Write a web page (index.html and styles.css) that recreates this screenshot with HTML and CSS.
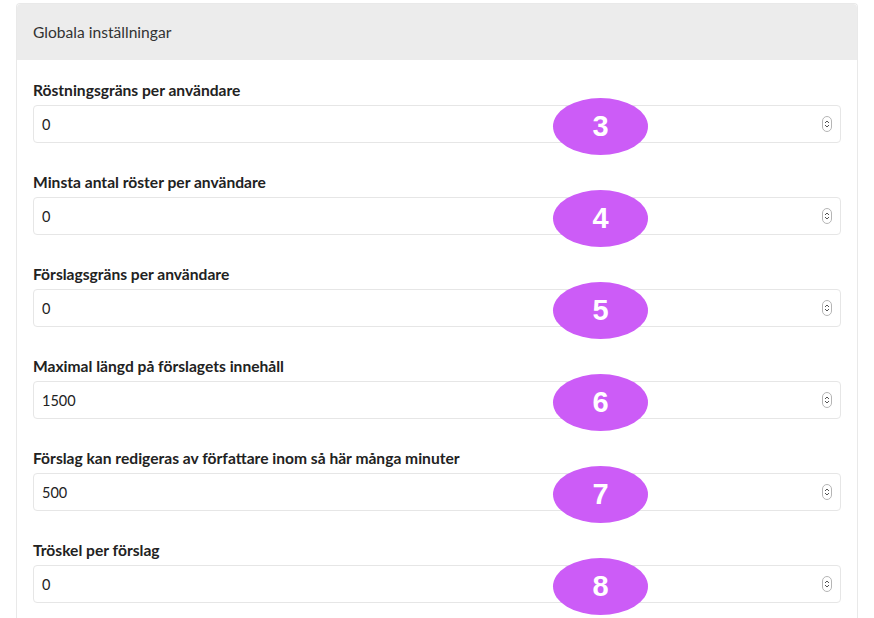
FILE: index.html
```html
<!DOCTYPE html>
<html lang="sv">
<head>
<meta charset="utf-8">
<title>Globala inställningar</title>
<link rel="stylesheet" href="styles.css">
</head>
<body>
<div class="card">
  <div class="card-header">Globala inställningar</div>
  <div class="card-body">
    <div class="group">
      <label class="label">Röstningsgräns per användare</label>
      <div class="field"><span class="value">0</span><span class="spin"><svg width="10" height="16" viewBox="0 0 10 16"><rect x="0.5" y="0.5" width="9" height="15" rx="4.5" fill="#fff" stroke="#b5b5b5"/><path d="M3 7 L5 5 L7 7 M3 9 L5 11 L7 9" fill="none" stroke="#555" stroke-width="1"/></svg></span><span class="badge">3</span></div>
    </div>
    <div class="group">
      <label class="label">Minsta antal röster per användare</label>
      <div class="field"><span class="value">0</span><span class="spin"><svg width="10" height="16" viewBox="0 0 10 16"><rect x="0.5" y="0.5" width="9" height="15" rx="4.5" fill="#fff" stroke="#b5b5b5"/><path d="M3 7 L5 5 L7 7 M3 9 L5 11 L7 9" fill="none" stroke="#555" stroke-width="1"/></svg></span><span class="badge">4</span></div>
    </div>
    <div class="group">
      <label class="label">Förslagsgräns per användare</label>
      <div class="field"><span class="value">0</span><span class="spin"><svg width="10" height="16" viewBox="0 0 10 16"><rect x="0.5" y="0.5" width="9" height="15" rx="4.5" fill="#fff" stroke="#b5b5b5"/><path d="M3 7 L5 5 L7 7 M3 9 L5 11 L7 9" fill="none" stroke="#555" stroke-width="1"/></svg></span><span class="badge">5</span></div>
    </div>
    <div class="group">
      <label class="label">Maximal längd på förslagets innehåll</label>
      <div class="field"><span class="value">1500</span><span class="spin"><svg width="10" height="16" viewBox="0 0 10 16"><rect x="0.5" y="0.5" width="9" height="15" rx="4.5" fill="#fff" stroke="#b5b5b5"/><path d="M3 7 L5 5 L7 7 M3 9 L5 11 L7 9" fill="none" stroke="#555" stroke-width="1"/></svg></span><span class="badge">6</span></div>
    </div>
    <div class="group">
      <label class="label">Förslag kan redigeras av författare inom så här många minuter</label>
      <div class="field"><span class="value">500</span><span class="spin"><svg width="10" height="16" viewBox="0 0 10 16"><rect x="0.5" y="0.5" width="9" height="15" rx="4.5" fill="#fff" stroke="#b5b5b5"/><path d="M3 7 L5 5 L7 7 M3 9 L5 11 L7 9" fill="none" stroke="#555" stroke-width="1"/></svg></span><span class="badge">7</span></div>
    </div>
    <div class="group">
      <label class="label">Tröskel per förslag</label>
      <div class="field"><span class="value">0</span><span class="spin"><svg width="10" height="16" viewBox="0 0 10 16"><rect x="0.5" y="0.5" width="9" height="15" rx="4.5" fill="#fff" stroke="#b5b5b5"/><path d="M3 7 L5 5 L7 7 M3 9 L5 11 L7 9" fill="none" stroke="#555" stroke-width="1"/></svg></span><span class="badge">8</span></div>
    </div>
  </div>
</div>
</body>
</html>
```

FILE: styles.css
```css
html, body {
  margin: 0;
  padding: 0;
  background: #fff;
}
body {
  padding: 3px 16px 0 16px;
  font-family: "Lato", "Open Sans", sans-serif;
  color: #222;
  overflow: hidden;
  height: 618px;
  box-sizing: border-box;
}
.card {
  width: 842px;
  height: 640px;
  border: 1px solid #e9e9e9;
  border-bottom: none;
  border-radius: 4px 4px 0 0;
  box-sizing: border-box;
}
.card-header {
  background: #ececec;
  height: 56px;
  padding: 0 16px;
  display: flex;
  align-items: center;
  font-size: 15.6px;
  color: #333;
  border-radius: 4px 4px 0 0;
}
.card-body {
  padding: 20px 16px 0 16px;
  display: flex;
  flex-direction: column;
  gap: 29px;
}
.group {
  display: flex;
  flex-direction: column;
  gap: 5px;
}
.label {
  font-weight: 700;
  font-size: 15.6px;
  line-height: 20px;
  color: #222;
}
.field {
  position: relative;
  height: 38px;
  border: 1px solid #e6e6e6;
  border-radius: 4px;
  box-sizing: border-box;
  display: flex;
  align-items: center;
  justify-content: space-between;
  padding: 0 8px 0 8px;
  font-size: 14.5px;
  color: #222;
}
.spin {
  display: flex;
  align-items: center;
}
.badge {
  position: absolute;
  left: 519px;
  top: -8px;
  width: 95px;
  height: 57px;
  border-radius: 50%;
  background: #cc5cf7;
  color: #fff;
  font-family: "Liberation Sans", Arial, sans-serif;
  font-weight: 700;
  font-size: 29px;
  display: flex;
  align-items: center;
  justify-content: center;
}
```
